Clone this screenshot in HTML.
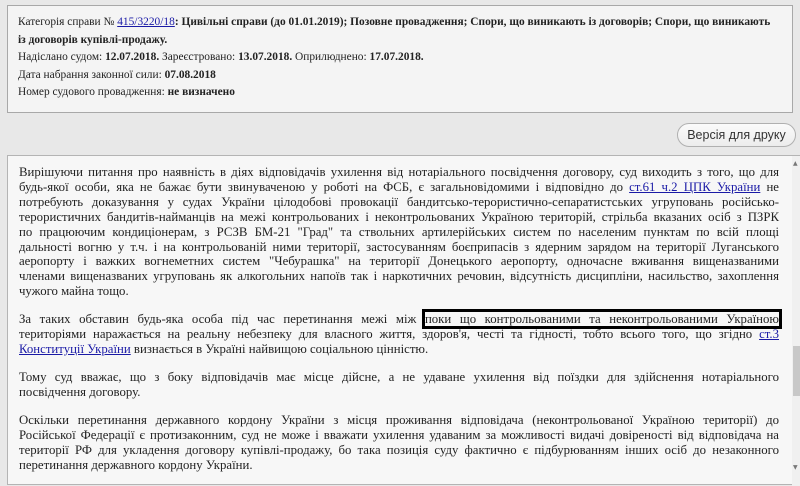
<!DOCTYPE html>
<html><head><meta charset="utf-8"><style>
html,body{margin:0;padding:0;width:800px;height:475px;overflow:hidden;background:#e8e8e8;font-family:"Liberation Serif","Times New Roman",serif;color:#222}
.top{position:absolute;left:7px;top:5px;width:786px;height:108px;background:#f4f4f4;border:1px solid #a8a8a8;box-sizing:border-box;padding:8px 0 0 10px;font-size:11.4px;line-height:17.5px;white-space:nowrap}
a{color:#1a1aa6;text-decoration:underline}
.btn{position:absolute;left:677px;top:123px;width:119px;height:24px;border:1px solid #b0b0b0;border-radius:12px;background:linear-gradient(#fbfbfb,#ececec);box-sizing:border-box;font-family:"Liberation Sans",sans-serif;font-size:12.5px;text-align:center;line-height:22px;color:#333}
.main{position:absolute;left:7px;top:155px;width:793px;height:330px;background:#f7f7f7;border:1px solid #b4b4b4;box-sizing:border-box}
.txt{position:absolute;left:11px;top:9px;width:760px;font-size:12.8px;line-height:14.9px}
.txt .j{text-align:justify;text-align-last:justify;white-space:normal}
.txt .l{text-align:left}
.txt .p{margin:0 0 13.1px 0}
.sb{position:absolute;left:784px;top:0;width:9px;height:330px;background:#f0f0f0}
.thumb{position:absolute;left:785px;top:190px;width:7px;height:50px;background:#c8c8c8}
.ar{position:absolute;left:785px;font-size:6px;color:#777;font-family:"DejaVu Sans",sans-serif}
.hl{outline:3px solid #000}
</style></head><body>
<div class="top">
Категорія справи № <a>415/3220/18</a><b>: Цивільні справи (до 01.01.2019); Позовне провадження; Спори, що виникають із договорів; Спори, що виникають</b><br>
<b>із договорів купівлі-продажу.</b><br>
Надіслано судом: <b>12.07.2018.</b> Зареєстровано: <b>13.07.2018.</b> Оприлюднено: <b>17.07.2018.</b><br>
Дата набрання законної сили: <b>07.08.2018</b><br>
Номер судового провадження: <b>не визначено</b>
</div>
<div class="btn">Версія для друку</div>
<div class="main">
<div class="txt">
<div class="p">
<div class="j">Вирішуючи питання про наявність в діях відповідачів ухилення від нотаріального посвідчення договору, суд виходить з того, що для</div>
<div class="j">будь-якої особи, яка не бажає бути звинуваченою у роботі на ФСБ, є загальновідомими і відповідно до <a>ст.61 ч.2 ЦПК України</a> не</div>
<div class="j">потребують доказування у судах України цілодобові провокації бандитсько-терористично-сепаратистських угруповань російсько-</div>
<div class="j">терористичних бандитів-найманців на межі контрольованих і неконтрольованих Україною територій, стрільба вказаних осіб з ПЗРК</div>
<div class="j">по працюючим кондиціонерам, з РСЗВ БМ-21 "Град" та ствольних артилерійських систем по населеним пунктам по всій площі</div>
<div class="j">дальності вогню у т.ч. і на контрольованій ними території, застосуванням боєприпасів з ядерним зарядом на території Луганського</div>
<div class="j">аеропорту і важких вогнеметних систем "Чебурашка" на території Донецького аеропорту, одночасне вживання вищеназваними</div>
<div class="j">членами вищеназваних угруповань як алкогольних напоїв так і наркотичних речовин, відсутність дисципліни, насильство, захоплення</div>
<div class="l">чужого майна тощо.</div>
</div>
<div class="p">
<div class="j">За таких обставин будь-яка особа під час перетинання межі між <span class="hl">поки що контрольованими та неконтрольованими Україною</span></div>
<div class="j">територіями наражається на реальну небезпеку для власного життя, здоров'я, честі та гідності, тобто всього того, що згідно <a>ст.3</a></div>
<div class="l"><a>Конституції України</a> визнається в Україні найвищою соціальною цінністю.</div>
</div>
<div class="p">
<div class="j">Тому суд вважає, що з боку відповідачів має місце дійсне, а не удаване ухилення від поїздки для здійснення нотаріального</div>
<div class="l">посвідчення договору.</div>
</div>
<div class="p">
<div class="j">Оскільки перетинання державного кордону України з місця проживання відповідача (неконтрольованої Україною території) до</div>
<div class="j">Російської Федерації є протизаконним, суд не може і вважати ухилення удаваним за можливості видачі довіреності від відповідача на</div>
<div class="j">території РФ для укладення договору купівлі-продажу, бо така позиція суду фактично є підбурюванням інших осіб до незаконного</div>
<div class="l">перетинання державного кордону України.</div>
</div>
</div>
<div class="sb"></div><div class="thumb"></div>
<div class="ar" style="top:4px">▲</div>
<div class="ar" style="top:308px">▼</div>
</div>
</body></html>
